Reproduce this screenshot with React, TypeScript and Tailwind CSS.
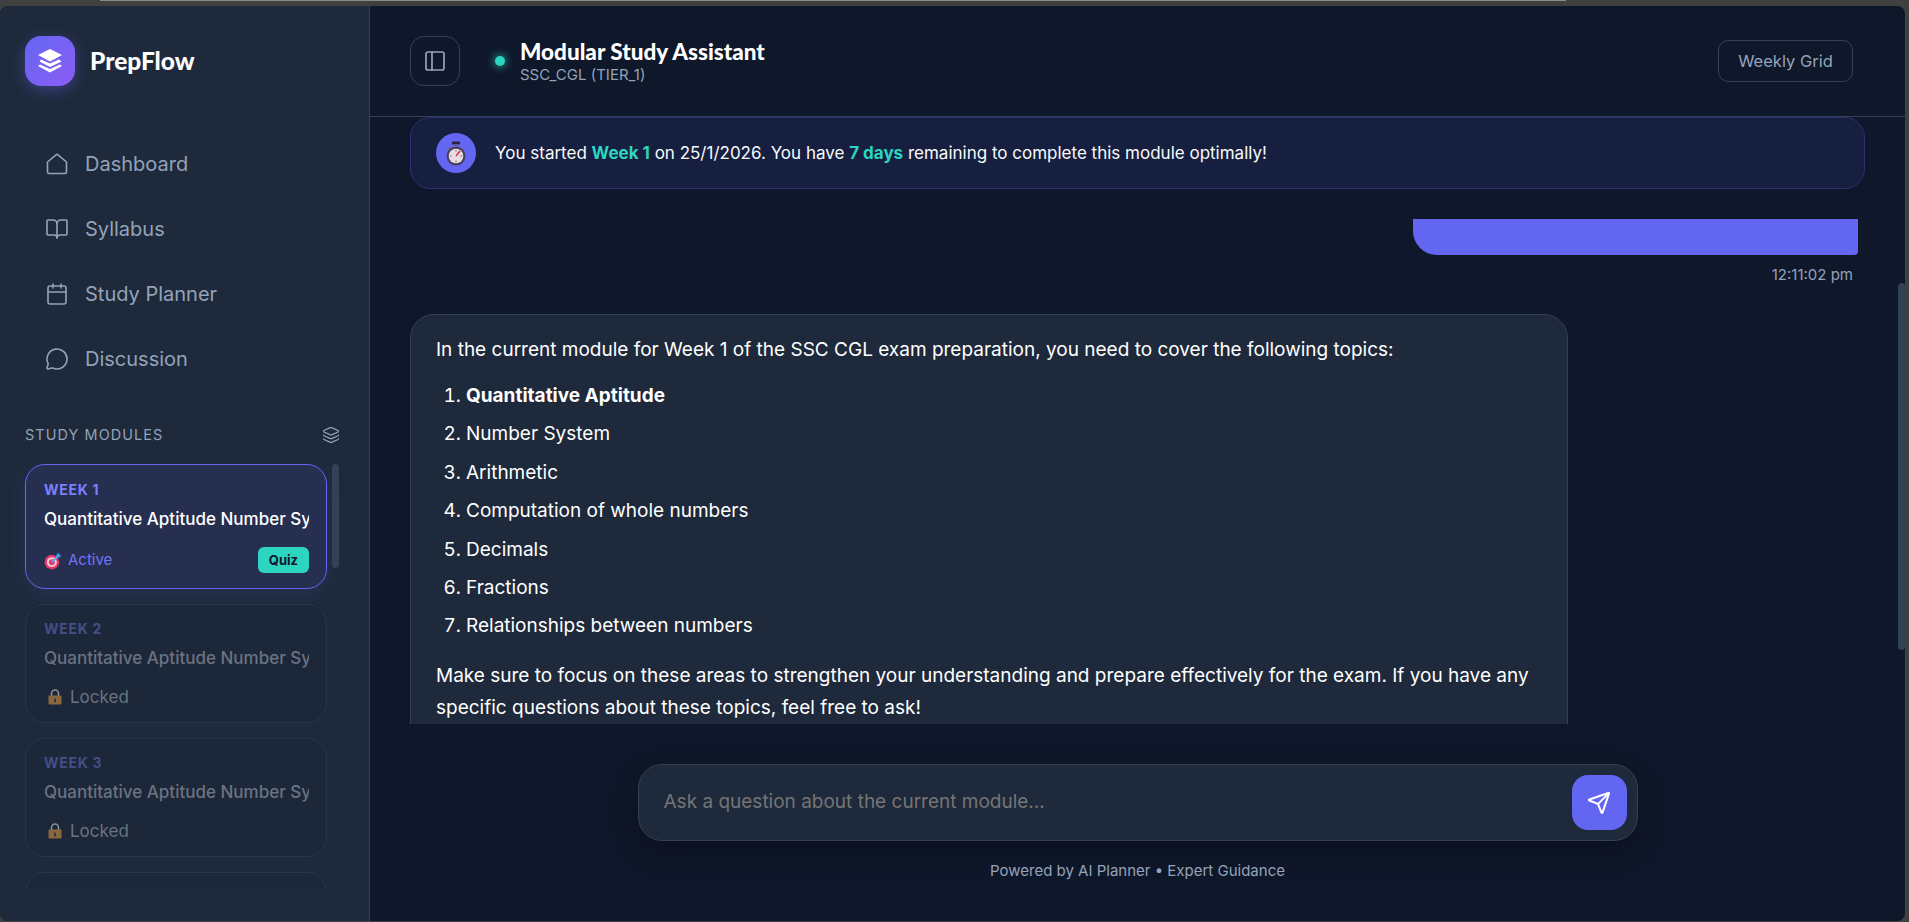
import React from "react";
import { BookOpen, Calendar, Layers, MessageCircle, PanelLeft, Send } from "lucide-react";

const HomeIcon = () => (
  <svg width="24" height="24" viewBox="0 0 24 24" fill="none" stroke="currentColor" strokeWidth="1.6" strokeLinejoin="round">
    <path d="M2.5 10 11 2.8a1.5 1.5 0 0 1 2 0L21.500 10v10a1.500 1.500 0 0 1-1.500 1.500H4A1.500 1.500 0 0 1 2.500 20Z" />
  </svg>
);

const LogoIcon = () => (
  <svg width="26" height="26" viewBox="0 0 26 26" fill="#fff">
    <path d="M13 1 25 7 13 13.500 1 7Z" />
    <path d="M4 11.500 13 15.500l9-4 2.500 2L13 19 2.500 13.500Z" />
    <path d="M3 16.500 13 21l10-4.500 2 1.500L13 24.500 1 18Z" />
  </svg>
);

const TargetEmoji = () => (
  <svg width="18" height="18" viewBox="0 0 16 16">
    <circle cx="7" cy="9" r="6.500" fill="#e0386c" />
    <circle cx="7" cy="9" r="4.400" fill="#f6c9d6" />
    <circle cx="7" cy="9" r="2.600" fill="#e0386c" />
    <path d="M7 9 13 3" stroke="#55acee" strokeWidth="1.500" />
    <path d="M11 2.500 13 .5l.5 2 2 .5-2 2-2.500-.5z" fill="#3b9be0" />
  </svg>
);

const LockEmoji = () => (
  <svg width="14" height="16" viewBox="0 0 14 16">
    <path d="M3.500 7V4.500a3.500 3.500 0 0 1 7 0V7" fill="none" stroke="#8d8f94" strokeWidth="1.600" />
    <rect x="0.500" y="6.500" width="13" height="9" rx="1" fill="#8a673f" />
    <rect x="6" y="9.500" width="2" height="4" rx="1" fill="#33363f" />
  </svg>
);

const StopwatchEmoji = () => (
  <svg width="20" height="25" viewBox="0 0 20 25">
    <rect x="6" y="0.500" width="8" height="3" rx="1" fill="#2b2440" />
    <rect x="9" y="3" width="2" height="3" fill="#6b6478" />
    <path d="M2 7.500 4 6l1.500 1.500-2 1.500z" fill="#6b6478" />
    <circle cx="10" cy="15" r="9.500" fill="#4b3f5c" />
    <circle cx="10" cy="15" r="7.300" fill="#e6dee2" />
    <path d="M10 15 14 10" stroke="#dd2e44" strokeWidth="1.500" />
    <path d="M10 9v1.500M10 19.500V21M4 15h1.500M14.500 15H16" stroke="#6b6478" strokeWidth="1" />
  </svg>
);

const navItems = [
  { label: "Dashboard", icon: <HomeIcon /> },
  { label: "Syllabus", icon: <BookOpen size={24} strokeWidth={1.6} /> },
  { label: "Study Planner", icon: <Calendar size={24} strokeWidth={1.6} /> },
  { label: "Discussion", icon: <MessageCircle size={24} strokeWidth={1.6} /> },
];

const topics = [
  "Number System",
  "Arithmetic",
  "Computation of whole numbers",
  "Decimals",
  "Fractions",
  "Relationships between numbers",
];

const LockedCard = ({ week }: { week: number }) => (
  <div className="mb-[15px] shrink-0 rounded-[20px] border border-[#2a3648] bg-[#1c2739] pt-[13px] pr-[17px] pb-[13px] pl-[18px]">
    <div className="text-[14px] leading-[21px] font-bold tracking-[0.7px] text-[#454e87]">WEEK {week}</div>
    <div className="mt-[7px] overflow-hidden text-[17px] leading-[24px] font-medium whitespace-nowrap text-[#6a7382]">
      Quantitative Aptitude Number System
    </div>
    <div className="mt-[15px] flex items-center gap-[5px] pl-[4px] text-[17px] leading-[24px] text-[#6a7382]">
      <LockEmoji />
      <span className="ml-[3px]">Locked</span>
    </div>
  </div>
);

const Sidebar = () => (
  <aside className="flex w-[370px] shrink-0 flex-col border-r border-[#334155] bg-[#1e293b]">
    <div className="flex items-center gap-[15px] pt-[30px] pl-[25px]">
      <div className="flex h-[50px] w-[50px] items-center justify-center rounded-2xl bg-gradient-to-br from-[#6366f1] to-[#8b5cf6] shadow-[0_4px_15px_rgba(99,102,241,0.4)]">
        <LogoIcon />
      </div>
      <span className="text-[24.500px] font-black text-white" style={{ fontFamily: "Lato, sans-serif" }}>PrepFlow</span>
    </div>

    <nav className="mt-[54px] flex flex-col gap-[17px] px-[25px]">
      {navItems.map((item) => (
        <div key={item.label} className="flex h-12 items-center gap-[16px] pl-[20px] text-[20px] text-[#94a3b8]">
          <span className="flex w-[24px] justify-center">{item.icon}</span>
          <span>{item.label}</span>
        </div>
      ))}
    </nav>

    <div className="mt-[41px] flex items-center justify-between pr-[29px] pl-[25px]">
      <span className="text-[14.400px] tracking-[1.100px] text-[#94a3b8]">STUDY MODULES</span>
      <Layers size={18} strokeWidth={1.500} className="text-[#94a3b8]" />
    </div>

    <div className="relative mt-[18px] flex h-[426px] flex-col overflow-hidden pr-[42px] pl-[25px]">
      <div className="mb-[15px] shrink-0 rounded-[20px] border border-[#6366f1] bg-[#262f50] pt-[14px] pr-[17px] pb-[15px] pl-[18px] shadow-[0_4px_20px_rgba(99,102,241,0.15)]">
        <div className="text-[14px] leading-[21px] font-bold tracking-[0.7px] text-[#7a80ff]">WEEK 1</div>
        <div className="mt-[7px] overflow-hidden text-[17px] leading-[24px] font-medium whitespace-nowrap text-white">
          Quantitative Aptitude Number System
        </div>
        <div className="mt-[16px] flex items-center justify-between">
          <div className="flex items-center gap-[6px] pt-[2px] text-[15px] text-[#6f75f5]">
            <TargetEmoji />
            <span>Active</span>
          </div>
          <span className="rounded-md bg-[#2dd4bf] px-[11px] py-[3px] text-[13px] leading-[20px] font-bold text-[#0f172a]">Quiz</span>
        </div>
      </div>
      <LockedCard week={2} />
      <LockedCard week={3} />
      <LockedCard week={4} />
      <div className="absolute top-0 right-[30px] h-[104px] w-[7px] rounded bg-[#334155]" />
    </div>
  </aside>
);

const Header = () => (
  <header className="flex h-[111px] shrink-0 items-center justify-between border-b border-[#334155] pr-[52px] pl-[40px]">
    <div className="flex items-center">
      <button className="flex h-[50px] w-[50px] items-center justify-center rounded-[14px] border border-[#334155] text-[#94a3b8]">
        <PanelLeft size={24} strokeWidth={1.700} />
      </button>
      <span className="ml-[35px] h-[10px] w-[10px] rounded-full bg-[#2dd4bf] shadow-[0_0_10px_#2dd4bf]" />
      <div className="ml-[15px]">
        <div className="text-[22.500px] leading-[26px] font-black text-white" style={{ fontFamily: "Lato, sans-serif" }}>Modular Study Assistant</div>
        <div className="mt-[1px] text-[15px] leading-[18px] text-[#94a3b8]">SSC_CGL (TIER_1)</div>
      </div>
    </div>
    <button className="h-[42px] w-[135px] rounded-[10px] border border-[#334155] text-[16.500px] text-[#94a3b8]">Weekly Grid</button>
  </header>
);

const Chat = () => (
  <div className="relative min-h-0 flex-1 overflow-hidden">
    <div className="mx-[40px] flex h-[72px] items-center gap-[19px] rounded-[20px] border border-[#2a3272] bg-[#161f3f] pl-[25px]">
      <div className="flex h-10 w-10 items-center justify-center rounded-full bg-[#6366f1]">
        <StopwatchEmoji />
      </div>
      <p className="mt-[1px] text-[17px] text-[#f8fafc]">
        You started <strong className="font-bold text-[#2dd4bf]">Week 1</strong> on 25/1/2026. You have{" "}
        <strong className="font-bold text-[#2dd4bf]">7 days</strong> remaining to complete this module optimally!
      </p>
    </div>

    <div className="mt-[30px] mr-[47px] flex flex-col items-end">
      <div className="h-[36px] w-[445px] rounded-bl-[24px] rounded-br-[4px] bg-[#6366f1]" />
      <div className="mt-[10px] mr-[5px] text-[15px] leading-[20px] text-[#94a3b8]">12:11:02 pm</div>
    </div>

    <div className="mt-[29px] ml-[40px] w-[1158px] rounded-[24px] border border-[#334155] bg-[#1e293b] px-[25px] pt-[21px] pb-[25px] text-[19px] leading-[28px] text-white">
      <p>In the current module for Week 1 of the SSC CGL exam preparation, you need to cover the following topics:</p>
      <ol className="mt-[18px] ml-[30px] list-decimal">
        <li className="mb-[10.400px]"><strong className="font-bold">Quantitative Aptitude</strong></li>
        {topics.map((t) => (
          <li key={t} className="mb-[10.400px]">{t}</li>
        ))}
      </ol>
      <p className="mt-[20px] leading-[32px]">
        Make sure to focus on these areas to strengthen your understanding and prepare effectively for the exam. If you have any specific questions about these topics, feel free to ask!
      </p>
    </div>
    <div className="absolute top-[166px] right-0 h-[367px] w-[7px] rounded bg-[#334155]" />
  </div>
);

const Composer = () => (
  <div className="flex h-[197px] shrink-0 flex-col items-center pt-[40px]">
    <div className="flex h-[77px] w-[1000px] items-center justify-between rounded-[24px] border border-[#334155] bg-[#1e293b] pr-[10px] pl-[25px] shadow-[0_10px_30px_rgba(0,0,0,0.3)]">
      <input
        className="w-[800px] bg-transparent text-[19px] text-white outline-none placeholder:text-[#757575]"
        placeholder="Ask a question about the current module..."
      />
      <button className="flex h-[55px] w-[55px] items-center justify-center rounded-[16px] bg-[#6366f1] text-white">
        <Send size={24} strokeWidth={2} />
      </button>
    </div>
    <div className="mt-[19px] text-[15px] leading-[21px] text-[#94a3b8]">Powered by AI Planner • Expert Guidance</div>
  </div>
);

export default function App() {
  return (
    <div className="flex h-screen flex-col overflow-hidden bg-[#404040] pr-[4px] pb-[1px]" style={{ fontFamily: "Inter, sans-serif" }}>
      <div className="ml-[100px] h-[1px] w-[1466px] shrink-0 bg-[#8a8a8a]" />
      <div className="mt-[5px] flex min-h-0 flex-1 overflow-hidden rounded-lg bg-[#0f172a]">
        <Sidebar />
        <main className="flex min-w-0 flex-1 flex-col">
          <Header />
          <Chat />
          <Composer />
        </main>
      </div>
    </div>
  );
}
